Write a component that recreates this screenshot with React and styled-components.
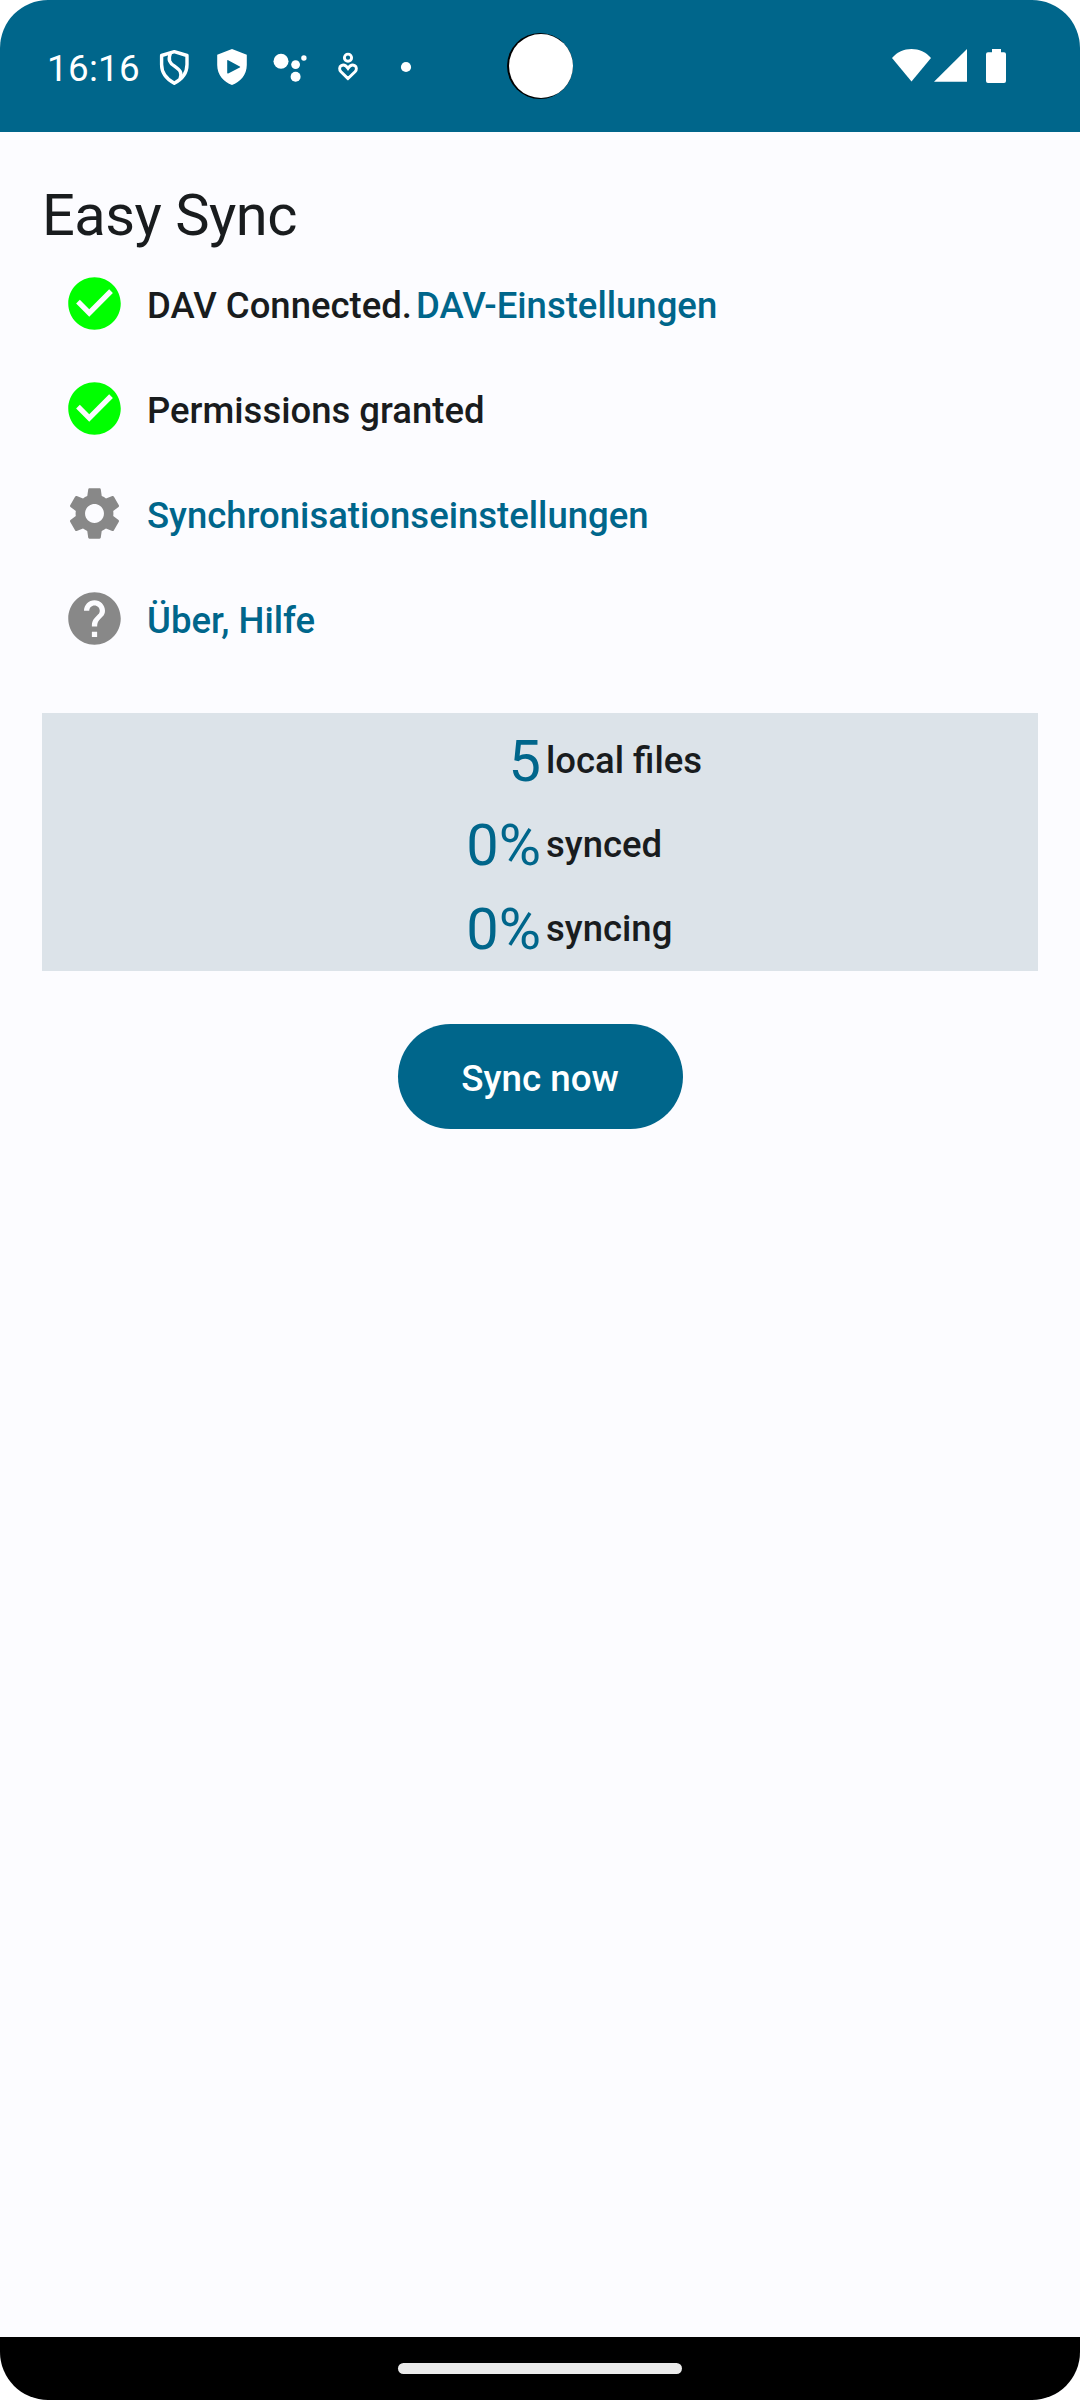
import React from "react";
import styled, { createGlobalStyle } from "styled-components";

const PRIMARY = "#00668b";
const INK = "#191c1e";

const GlobalStyle = createGlobalStyle`
  *, *::before, *::after { box-sizing: border-box; }
  html, body { margin: 0; padding: 0; background: #ffffff; }
  body { font-family: Roboto, "Noto Sans", sans-serif; color: ${INK}; }
`;

const Screen = styled.div`
  display: flex;
  flex-direction: column;
  position: relative;
  width: 1080px;
  height: 2400px;
  overflow: hidden;
  border-radius: 48px;
  background: #fcfcff;
`;

const StatusBar = styled.header`
  display: flex;
  align-items: center;
  justify-content: space-between;
  flex: none;
  height: 132px;
  padding: 0 74px 0 47px;
  background: ${PRIMARY};
  color: #ffffff;
`;

const StatusGroup = styled.div`
  display: flex;
  align-items: center;
`;

const Clock = styled.time`
  width: 98px;
  font-size: 36.75px;
  line-height: 44px;
  letter-spacing: 0.3px;
  padding-top: 5px;
`;

const NotificationSlot = styled.span`
  display: flex;
  justify-content: center;
  width: 58px;
`;

const StatusGlyph = styled.svg`
  display: block;
  width: ${(p) => p.$w}px;
  height: 42px;
  margin-left: ${(p) => p.$gap || 0}px;
`;

const Camera = styled.div`
  position: absolute;
  top: 33px;
  left: 507px;
  width: 66px;
  height: 66px;
  padding: 1px 0 0 2px;
  border-radius: 50%;
  background: #000000;
  &::after {
    content: "";
    display: block;
    width: 64px;
    height: 64px;
    border-radius: 50%;
    background: #ffffff;
  }
`;

const Content = styled.main`
  display: flex;
  flex-direction: column;
  flex: 1;
  padding: 47px 42px 0;
`;

const Title = styled.h1`
  margin: 0;
  height: 72px;
  font-size: 57.75px;
  font-weight: 400;
  line-height: 73px;
  letter-spacing: -0.5px;
`;

const ItemList = styled.ul`
  list-style: none;
  margin: 0;
  padding: 0;
`;

const Item = styled.li`
  display: flex;
  align-items: center;
  height: 105px;
  padding-left: 21px;
`;

const ItemIcon = styled.svg`
  display: block;
  width: 63px;
  height: 63px;
  margin-right: 21px;
  fill: ${(p) => p.$color};
`;

const Label = styled.span`
  font-size: 36.5px;
  font-weight: 500;
  line-height: 52px;
  padding-top: 4px;
`;

const LinkLabel = styled(Label)`
  color: ${PRIMARY};
  margin-left: ${(p) => p.$gap || 0}px;
`;

const StatsPanel = styled.section`
  display: flex;
  flex-direction: column;
  height: 258px;
  margin-top: 42px;
  padding: 5px 0 0;
  background: #dce3e9;
`;

const StatRow = styled.div`
  display: grid;
  grid-template-columns: 499px 1fr;
  align-items: center;
  height: 84px;
`;

const StatValue = styled.span`
  justify-self: end;
  padding-top: 2px;
  font-size: 57.75px;
  line-height: 73px;
  color: ${PRIMARY};
`;

const StatLabel = styled(Label)`
  padding: 2px 0 0 5px;
`;

const SyncButton = styled.button`
  align-self: center;
  width: 285px;
  height: 105px;
  margin-top: 53px;
  padding: 3px 0 0;
  border: 0;
  border-radius: 53px;
  background: ${PRIMARY};
  color: #ffffff;
  font-family: inherit;
  font-size: 36.75px;
  font-weight: 500;
`;

const NavBar = styled.footer`
  display: flex;
  justify-content: center;
  flex: none;
  height: 63px;
  padding-top: 26px;
  background: #000000;
`;

const HomeHandle = styled.div`
  width: 284px;
  height: 11px;
  border-radius: 6px;
  background: #ebebeb;
`;

const Slot = ({ children }) => (
  <NotificationSlot>
    <StatusGlyph $w={42} viewBox="-21 -21 42 42">
      {children}
    </StatusGlyph>
  </NotificationSlot>
);

const ICONS = {
  check:
    "M12 2C6.48 2 2 6.48 2 12s4.48 10 10 10 10-4.48 10-10S17.52 2 12 2zm-2 15l-5-5 1.41-1.41L10 14.17l7.59-7.59L19 8l-9 9z",
  settings:
    "M19.14 12.94c.04-.3.06-.61.06-.94 0-.32-.02-.64-.07-.94l2.03-1.58c.18-.14.23-.41.12-.61l-1.92-3.32c-.12-.22-.37-.29-.59-.22l-2.39.96c-.5-.38-1.03-.7-1.62-.94l-.36-2.54c-.04-.24-.24-.41-.48-.41h-3.84c-.24 0-.43.17-.47.41l-.36 2.54c-.59.24-1.13.57-1.62.94l-2.39-.96c-.22-.08-.47 0-.59.22L2.74 8.87c-.12.21-.08.47.12.61l2.03 1.58c-.05.3-.09.63-.09.94s.02.64.07.94l-2.03 1.58c-.18.14-.23.41-.12.61l1.92 3.32c.12.22.37.29.59.22l2.39-.96c.5.38 1.03.7 1.62.94l.36 2.54c.05.24.24.41.48.41h3.84c.24 0 .44-.17.47-.41l.36-2.54c.59-.24 1.13-.56 1.62-.94l2.39.96c.22.08.47 0 .59-.22l1.92-3.32c.12-.22.07-.47-.12-.61l-2.01-1.58zM12 15.6c-1.98 0-3.6-1.62-3.6-3.6s1.62-3.6 3.6-3.6 3.6 1.62 3.6 3.6-1.62 3.6-3.6 3.6z",
  help: "M12 2C6.48 2 2 6.48 2 12s4.48 10 10 10 10-4.48 10-10S17.52 2 12 2zm1 17h-2v-2h2v2zm2.07-7.75l-.9.92C13.45 12.9 13 13.5 13 15h-2v-.5c0-1.1.45-2.1 1.17-2.83l1.24-1.26c.37-.36.59-.86.59-1.41 0-1.1-.9-2-2-2s-2 .9-2 2H8c0-2.21 1.79-4 4-4s4 1.79 4 4c0 .88-.36 1.68-.93 2.25z",
};

const Row = ({ icon, color, children }) => (
  <Item>
    <ItemIcon viewBox="0 0 24 24" $color={color}>
      <path d={ICONS[icon]} />
    </ItemIcon>
    {children}
  </Item>
);

const STATS = [
  { value: "5", label: "local files" },
  { value: "0%", label: "synced" },
  { value: "0%", label: "syncing" },
];

export default function App() {
  return (
    <>
      <GlobalStyle />
      <Screen>
        <StatusBar>
          <StatusGroup>
            <Clock>16:16</Clock>
            <Slot>
              <g fill="none" stroke="#fff" strokeWidth="3.4" strokeLinejoin="round">
                <path d="M0.3 -14.3 L13 -10.5 V-1.5 C13 7 7.5 13.5 0.3 17.2 C-6.7 13.5 -12.4 7 -12.4 -1.5 V-10.5 Z" />
                <path d="M-3.5 -13 C-6.2 -6 -4.5 -3.2 0.5 0.2 C6 4 8.5 6.5 6 13" />
              </g>
            </Slot>
            <Slot>
              <path
                fill="#fff"
                fillRule="evenodd"
                d="M0 -17 L14.8 -11.2 V-1 C14.8 9 8 16 0 19 C-8 16 -14.8 9 -14.8 -1 V-11.2 Z M-4.8 -5.2 V6.8 Q-4.8 8 -3.8 7.4 L7.8 1.6 Q8.8 1 7.8 0.4 L-3.8 -5.8 Q-4.8 -6.3 -4.8 -5.2 Z"
              />
            </Slot>
            <Slot>
              <g fill="#fff">
                <circle cx="-9" cy="-4.7" r="7.5" />
                <circle cx="5.6" cy="-1.4" r="4.4" />
                <circle cx="5.6" cy="10.7" r="5" />
                <circle cx="13.9" cy="-8" r="2.7" />
              </g>
            </Slot>
            <Slot>
              <g fill="none" stroke="#fff" strokeWidth="2.9">
                <circle cx="0" cy="-8.3" r="3.6" />
                <path d="M0 12.6 L-7 5.8 C-9 3.6 -8.8 0.8 -6.6 -0.4 C-4.4 -1.5 -2 -0.6 0 2.4 C2 -0.6 4.4 -1.5 6.6 -0.4 C8.8 0.8 9 3.6 7 5.8 Z" />
              </g>
            </Slot>
            <Slot>
              <circle cx="0" cy="1" r="5.1" fill="#fff" />
            </Slot>
          </StatusGroup>
          <StatusGroup>
            <StatusGlyph $w={39} viewBox="0 0 39 42">
              <path fill="#fff" d="M19.5 36.5 L0 13 C5 7 12 4 19.5 4 S34 7 39 13 Z" />
            </StatusGlyph>
            <StatusGlyph $w={33} $gap={3} viewBox="0 0 33 42">
              <path fill="#fff" d="M33 4 V36.7 H0 Z" />
            </StatusGlyph>
            <StatusGlyph $w={20} $gap={19} viewBox="0 0 20 42">
              <path
                fill="#fff"
                d="M6 4 H15 V7.3 H18 Q20 7.3 20 9.3 V36 Q20 38 18 38 H2 Q0 38 0 36 V9.3 Q0 7.3 2 7.3 H6 Z"
              />
            </StatusGlyph>
          </StatusGroup>
          <Camera />
        </StatusBar>

        <Content>
          <Title>Easy Sync</Title>
          <ItemList>
            <Row icon="check" color="#00ff00">
              <Label>DAV Connected.</Label>
              <LinkLabel $gap={4}>DAV-Einstellungen</LinkLabel>
            </Row>
            <Row icon="check" color="#00ff00">
              <Label>Permissions granted</Label>
            </Row>
            <Row icon="settings" color="#888888">
              <LinkLabel>Synchronisationseinstellungen</LinkLabel>
            </Row>
            <Row icon="help" color="#888888">
              <LinkLabel>Über, Hilfe</LinkLabel>
            </Row>
          </ItemList>

          <StatsPanel>
            {STATS.map((s) => (
              <StatRow key={s.label}>
                <StatValue>{s.value}</StatValue>
                <StatLabel>{s.label}</StatLabel>
              </StatRow>
            ))}
          </StatsPanel>

          <SyncButton type="button">Sync now</SyncButton>
        </Content>

        <NavBar>
          <HomeHandle />
        </NavBar>
      </Screen>
    </>
  );
}
